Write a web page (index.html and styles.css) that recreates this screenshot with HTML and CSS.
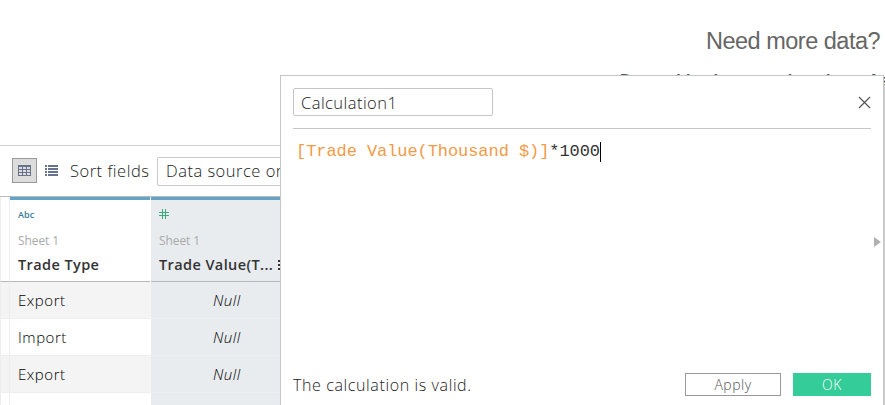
FILE: index.html
```html
<!DOCTYPE html>
<html lang="en">
<head>
<meta charset="utf-8">
<title>Data source</title>
<link rel="stylesheet" href="styles.css">
</head>
<body>
<main class="app">
  <section class="canvas">
    <h1 class="canvas-title">Need more data?</h1>
    <p class="canvas-hint">Drag tables here to relate them. As</p>
  </section>
  <section class="toolbar">
    <button class="view-btn active" aria-label="Grid view">
      <svg width="13" height="11" viewBox="0 0 13 11" shape-rendering="crispEdges"><path fill="#66738a" fill-rule="evenodd" d="M0 0h13v11H0zM1 2v2h3V2zM5 2v2h3V2zM9 2v2h3V2zM1 5v2h3V5zM5 5v2h3V5zM9 5v2h3V5zM1 8v2h3V8zM5 8v2h3V8zM9 8v2h3V8z"/></svg>
    </button>
    <button class="view-btn list" aria-label="List view">
      <svg width="13" height="11" viewBox="0 0 13 11" shape-rendering="crispEdges"><path fill="#66738a" d="M0 0h2v2H0zM3 0h10v2H3zM0 3h2v2H0zM3 3h10v2H3zM0 6h2v2H0zM3 6h10v2H3zM0 9h2v2H0zM3 9h10v2H3z"/></svg>
    </button>
    <span class="sort-label">Sort fields</span>
    <div class="sort-select">Data source order</div>
  </section>
  <section class="table">
    <div class="cell gutter head"></div>
    <div class="cell head field">
      <span class="type-text">Abc</span>
      <span class="sheet">Sheet 1</span>
      <span class="name">Trade Type</span>
    </div>
    <div class="cell head field selected">
      <span class="type-icon"><svg width="10" height="10" viewBox="0 0 10 10"><path d="M3.5 0v10M6.5 0v10M0 3.5h10M0 6.5h10" stroke="#3fa77c" fill="none"/></svg></span>
      <span class="sheet">Sheet 1</span>
      <span class="name value-name"><span class="value-text">Trade Value(T...</span><svg class="handle" width="4" height="11" viewBox="0 0 4 11"><path d="M0 0h2v2H0zM0 4h2v2H0zM0 8h2v2H0z" fill="#333"/></svg></span>
    </div>
    <div class="cell gutter odd"></div><div class="cell odd"><span class="export">Export</span></div><div class="cell selected null"><span>Null</span></div>
    <div class="cell gutter"></div><div class="cell"><span class="import">Import</span></div><div class="cell selected null"><span>Null</span></div>
    <div class="cell gutter odd"></div><div class="cell odd"><span class="export">Export</span></div><div class="cell selected null"><span>Null</span></div>
    <div class="cell gutter"></div><div class="cell"></div><div class="cell selected"></div>
  </section>
  <section class="dialog">
    <header class="dialog-head">
      <div class="calc-name">Calculation1</div>
      <svg class="close" width="13" height="13" viewBox="0 0 13 13"><path d="M1 1l11 11M12 1L1 12" stroke="#555" stroke-width="1.2" fill="none"/></svg>
    </header>
    <div class="formula"><span class="field-ref">[Trade Value(Thousand $)]</span>*1000<span class="caret"></span></div>
    <svg class="expand" width="7" height="10" viewBox="0 0 7 10"><path d="M0 0l7 5-7 5z" fill="#b0b0b0"/></svg>
    <footer class="dialog-foot">
      <span class="status">The calculation is valid.</span>
      <button class="btn apply">Apply</button>
      <button class="btn ok">OK</button>
    </footer>
  </section>
</main>
</body>
</html>
```
FILE: styles.css
```css
* { box-sizing: border-box; }
body { margin: 0; background: #fff; }
button { font: inherit; padding: 0; margin: 0; background: none; border: 0; }
svg { display: block; }

.app {
  position: relative;
  width: 885px;
  height: 405px;
  overflow: hidden;
  font-family: "Open Sans", sans-serif;
  color: #222;
}

.canvas {
  height: 145px;
  overflow: hidden;
  font-family: "Liberation Sans", sans-serif;
  color: #666;
  white-space: nowrap;
}
.canvas-title {
  margin: 27px 0 0 706px;
  font-size: 23.5px;
  line-height: 28px;
  font-weight: 400;
  letter-spacing: -0.5px;
}
.canvas-hint {
  margin: 16px 0 0 620px;
  font-size: 16px;
  line-height: 20px;
  font-weight: 700;
  letter-spacing: 0.15px;
  color: #555;
}

.toolbar {
  height: 52px;
  display: flex;
  align-items: center;
  padding-left: 12px;
  border-top: 1px solid #d0d0d0;
  border-bottom: 1px solid #b9b9b9;
  white-space: nowrap;
}
.view-btn {
  width: 25px;
  height: 25px;
  display: flex;
  align-items: center;
  justify-content: center;
  margin-bottom: 1px;
}
.view-btn.active { background: #dcdcdc; border: 1px solid #999; }
.view-btn.list { margin-left: 2px; }
.sort-label { margin: 0 0 2px 6px; width: 87px; font-size: 16.5px; font-weight: 300; letter-spacing: 0.5px; }
.sort-select {
  width: 200px;
  height: 29px;
  padding-left: 8px;
  border: 1px solid #c8c8c8;
  border-radius: 2px;
  font-size: 16.5px;
  line-height: 25px;
  font-weight: 300;
  letter-spacing: 0.5px;
}

.table {
  display: grid;
  grid-template-columns: 10px 141px 140px;
  grid-template-rows: 85px repeat(4, 37px);
}
.cell {
  display: flex;
  align-items: center;
  padding-left: 8px;
  border-bottom: 1px solid #eee;
  font-size: 15px;
  font-weight: 300;
  letter-spacing: 0.55px;
  color: #000;
}
.gutter { border-right: 1px solid #eee; border-left: 1px solid #eee; }
.odd { background: #f4f4f4; }
.selected { background: #e8ecef; }
.null { padding-left: 62px; font-style: italic; }
.head { border-bottom-color: #b9b9b9; }
.field {
  flex-direction: column;
  align-items: flex-start;
  border-top: 3px solid #62a4c7;
  white-space: nowrap;
}
.field:nth-child(2) { margin-right: 1px; }
.type-text {
  height: 16px;
  margin-top: 7px;
  font-size: 9px;
  line-height: 16px;
  font-weight: 600;
  letter-spacing: 0.1px;
  color: #377b96;
}
.type-icon { height: 16px; margin-top: 6px; padding-top: 3px; }
.type-icon + .sheet { margin-top: 9px; }
.sheet {
  height: 20px;
  margin-top: 8px;
  font-size: 12px;
  line-height: 20px;
  font-weight: 400;
  letter-spacing: -0.1px;
  color: #aaa;
}
.name {
  height: 20px;
  margin-top: 4px;
  font-size: 14.5px;
  line-height: 20px;
  font-weight: 600;
  letter-spacing: 0.4px;
  color: #333;
}
.value-name { display: flex; align-items: center; }
.value-text { width: 119px; }

.dialog {
  position: absolute;
  left: 280px;
  top: 75px;
  width: 604px;
  height: 331px;
  display: flex;
  flex-direction: column;
  padding: 0 12px;
  background: #fff;
  border: 1px solid #c6c6c6;
  border-bottom: 0;
  box-shadow: 1px 10px 0 0 #ccc;
}
.dialog-head {
  height: 53px;
  display: flex;
  align-items: center;
  justify-content: space-between;
  border-bottom: 1px solid #c6c6c6;
}
.calc-name {
  width: 200px;
  height: 28px;
  padding-left: 7px;
  border: 1px solid #c6c6c6;
  border-radius: 2px;
  font-size: 16.5px;
  line-height: 28px;
  font-weight: 300;
  letter-spacing: 0.45px;
}
.formula {
  flex: 1;
  display: flex;
  align-items: flex-start;
  padding: 13px 0 0 3px;
  font: 17px/20px "Liberation Mono", monospace;
  letter-spacing: -0.07px;
  white-space: pre;
  color: #333;
}
.field-ref { color: #f39a47; }
.caret { width: 1px; height: 20px; background: #000; }
.expand { position: absolute; right: 2px; top: 161px; }
.dialog-foot {
  height: 33px;
  display: flex;
  align-items: flex-start;
}
.status { flex: 1; font-size: 16px; line-height: 24px; font-weight: 300; letter-spacing: 0.62px; }
.btn { height: 23px; font-size: 14px; font-weight: 300; line-height: 21px; letter-spacing: 0.5px; }
.apply { width: 96px; border: 1px solid #999; color: #555; }
.ok { width: 78px; margin-left: 12px; background: #34cc98; color: #fff; }
```
